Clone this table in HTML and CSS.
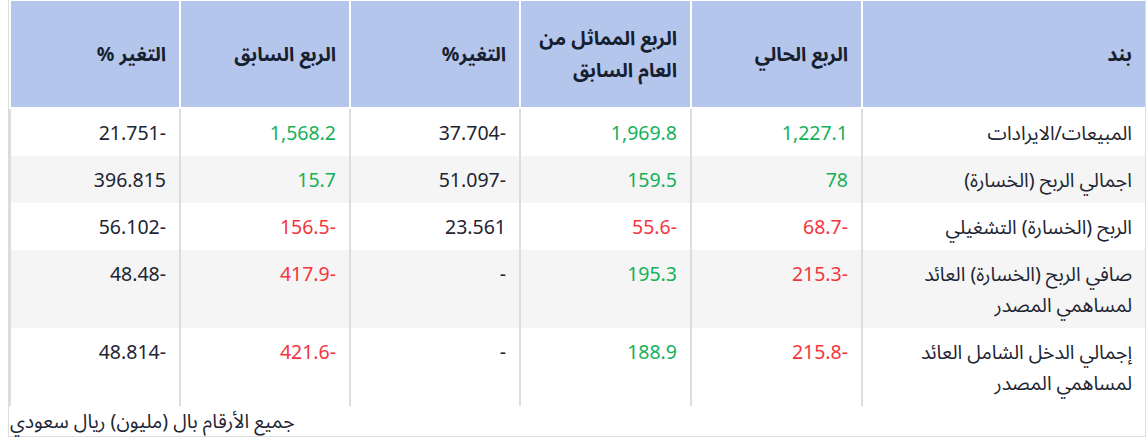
FILE: index.html
```html
<!DOCTYPE html>
<html lang="ar" dir="rtl">
<head>
<meta charset="utf-8">
<title>النتائج المالية</title>
<link rel="stylesheet" href="styles.css">
</head>
<body>
<div class="wrap">
  <table class="fin">
    <colgroup>
      <col class="c-item">
      <col class="c-num">
      <col class="c-num">
      <col class="c-num2">
      <col class="c-num2">
      <col class="c-num2">
    </colgroup>
    <thead>
      <tr>
        <th>بند</th>
        <th>الربع الحالي</th>
        <th>الربع المماثل من العام السابق</th>
        <th>التغير%</th>
        <th>الربع السابق</th>
        <th>التغير %</th>
      </tr>
    </thead>
    <tbody>
      <tr>
        <td>المبيعات/الايرادات</td>
        <td class="pos">1,227.1</td>
        <td class="pos">1,969.8</td>
        <td><span class="n">37.704-</span></td>
        <td class="pos">1,568.2</td>
        <td><span class="n">21.751-</span></td>
      </tr>
      <tr class="alt">
        <td>اجمالي الربح (الخسارة)</td>
        <td class="pos">78</td>
        <td class="pos">159.5</td>
        <td><span class="n">51.097-</span></td>
        <td class="pos">15.7</td>
        <td><span class="n">396.815</span></td>
      </tr>
      <tr>
        <td>الربح (الخسارة) التشغيلي</td>
        <td class="neg"><span class="n">68.7-</span></td>
        <td class="neg"><span class="n">55.6-</span></td>
        <td><span class="n">23.561</span></td>
        <td class="neg"><span class="n">156.5-</span></td>
        <td><span class="n">56.102-</span></td>
      </tr>
      <tr class="alt tall">
        <td>صافي الربح (الخسارة) العائد لمساهمي المصدر</td>
        <td class="neg"><span class="n">215.3-</span></td>
        <td class="pos">195.3</td>
        <td>-</td>
        <td class="neg"><span class="n">417.9-</span></td>
        <td><span class="n">48.48-</span></td>
      </tr>
      <tr class="tall">
        <td>إجمالي الدخل الشامل العائد لمساهمي المصدر</td>
        <td class="neg"><span class="n">215.8-</span></td>
        <td class="pos">188.9</td>
        <td>-</td>
        <td class="neg"><span class="n">421.6-</span></td>
        <td><span class="n">48.814-</span></td>
      </tr>
    </tbody>
  </table>
  <p class="note">جميع الأرقام بال (مليون) ريال سعودي</p>
</div>
</body>
</html>
```

FILE: styles.css
```css
html, body {
  margin: 0;
  padding: 0;
  background: #ffffff;
}

body {
  font-family: "Noto Sans", "Noto Sans Arabic", "DejaVu Sans", sans-serif;
  color: #1d2532;
}

.wrap {
  margin-left: 5px;
  width: 1136px;
  padding-top: 1px;
  border-left: 1px solid #dddddd;
  border-right: 1px solid #dddddd;
  border-bottom: 1px solid #dddddd;
}

.fin {
  width: 1136px;
  table-layout: fixed;
  border-collapse: separate;
  border-spacing: 0;
  font-size: 19.5px;
}

.c-item { width: 284px; }
.c-num { width: 171px; }
.c-num2 { width: 170px; }

.fin th {
  height: 108px;
  box-sizing: border-box;
  background: #b4c6ec;
  border-left: 2px solid #ffffff;
  border-bottom: 2px solid #ffffff;
  padding: 0 13px 0 10px;
  text-align: right;
  vertical-align: middle;
  font-weight: 700;
  line-height: 32px;
  color: #17202e;
}

.fin td {
  border-left: 2px solid #dddddd;
  padding: 8px 13px 8px 10px;
  text-align: right;
  vertical-align: top;
  line-height: 31px;
  color: #1d2532;
}

.fin tr.alt td {
  background: #f5f5f5;
}

.fin td.pos { color: #15b15a; }
.fin td.neg { color: #f4363f; }

.n {
  direction: ltr;
  unicode-bidi: isolate;
}

.note {
  margin: 0;
  height: 30px;
  line-height: 30px;
  padding-left: 1px;
  text-align: left;
  font-size: 19.5px;
  color: #1d2532;
}
```
